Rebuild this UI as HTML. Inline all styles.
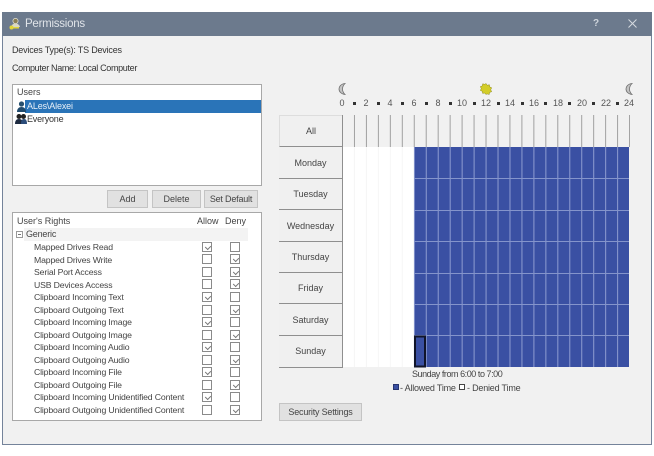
<!DOCTYPE html>
<html><head><meta charset="utf-8"><style>
html,body{margin:0;padding:0;background:#fff}
body{width:654px;height:456px;position:relative;overflow:hidden;font-family:"Liberation Sans",sans-serif;font-size:9px;color:#3a3a3a;filter:blur(.35px)}
.a{position:absolute;white-space:nowrap}
.btn{position:absolute;background:#e1e1e1;border:1px solid #c4c4c4;box-sizing:border-box;text-align:center;color:#444;font-size:9px}
.day{position:absolute;left:279px;width:64px;background:#f0f0f0;border-bottom:1px solid #8f8f8f;border-right:1px solid #8f8f8f;box-sizing:border-box;text-align:center;color:#444;font-size:9px}
.r{position:absolute;left:34px;white-space:nowrap;font-size:8.7px;letter-spacing:-.15px;line-height:12px;color:#444}
.c{position:absolute;width:10px;height:10px;background:#fff;border:1px solid #8a8a8a;box-sizing:border-box}
.t:after{content:"";position:absolute;left:2px;top:1px;width:4px;height:2.5px;border-left:1px solid #777;border-bottom:1px solid #777;transform:rotate(-45deg) translate(-0.5px,1px)}
.h{position:absolute;top:97px;width:16px;text-align:center;font-size:9px;line-height:12px;color:#555}
.dot{position:absolute;top:102px;width:3px;height:3px;background:#333}
</style></head><body>

<div class="a" style="left:2px;top:12px;width:650px;height:433px;background:#f1f1f1;border:1px solid #74839a;box-sizing:border-box"></div>
<div class="a" style="left:2px;top:12px;width:650px;height:24px;background:#6c7a8d"></div>
<svg class="a" style="left:8px;top:17px" width="14" height="14" viewBox="0 0 14 14"><circle cx="7.5" cy="4" r="2.6" fill="#8a7f55" stroke="#e8e6d8" stroke-width=".7"/><path d="M3 10c.5-2.5 2.500-3.400 4.500-3.400S11.500 7.500 12 10z" fill="#dad8c4"/><circle cx="3.500" cy="10.500" r="2" fill="#e2d63a"/><rect x="4" y="10" width="7" height="1.500" fill="#e2d63a"/></svg>
<div class="a" style="left:25px;top:17px;font-size:11.5px;letter-spacing:-.25px;line-height:15px;color:#dfe3e8">Permissions</div>
<div class="a" style="left:593px;top:18px;font-size:10px;font-weight:bold;line-height:12px;color:#cfd5dc">?</div>
<svg class="a" style="left:628px;top:19px" width="9" height="9" viewBox="0 0 9 9"><path d="M.5.500l8 8M8.500.500l-8 8" stroke="#d5dae0" stroke-width="1"/></svg>

<div class="a" style="left:12px;top:44px;line-height:12px;color:#333;letter-spacing:-.2px">Devices Type(s): TS Devices</div>
<div class="a" style="left:12px;top:62px;line-height:12px;color:#333;letter-spacing:-.33px">Computer Name: Local Computer</div>

<div class="a" style="left:12px;top:84px;width:250px;height:102px;background:#fff;border:1px solid #a8a8a8;box-sizing:border-box"></div>
<div class="a" style="left:17px;top:86px;line-height:12px;color:#444">Users</div>
<div class="a" style="left:25px;top:100px;width:236px;height:13px;background:#2a74b8"></div>
<div class="a" style="left:27px;top:100px;line-height:13px;color:#e8f0f8;letter-spacing:-.15px">ALes\Alexei</div>
<svg class="a" style="left:16px;top:100px" width="10" height="13" viewBox="0 0 10 13"><circle cx="5.500" cy="4" r="2.600" fill="#27506f"/><path d="M1 12c0-3.500 2-5 4.500-5S10 8.500 10 12z" fill="#1f4a6d"/></svg>
<svg class="a" style="left:15px;top:113px" width="12" height="12" viewBox="0 0 12 12"><circle cx="4" cy="3.500" r="2.500" fill="#222"/><circle cx="8.500" cy="3.500" r="2.500" fill="#222"/><path d="M0 11c0-3.500 1.500-5 4-5s4 1.500 4 5z" fill="#1d2a40"/><path d="M6 11c0-3.500 1-5 3-5s3 1.500 3 5z" fill="#2b4c7a"/></svg>
<div class="a" style="left:27px;top:113px;line-height:12px;color:#333;letter-spacing:-.2px">Everyone</div>

<div class="btn" style="left:107px;top:190px;width:41px;height:18px;line-height:16px">Add</div>
<div class="btn" style="left:152px;top:190px;width:49px;height:18px;line-height:16px">Delete</div>
<div class="btn" style="left:204px;top:190px;width:54px;height:18px;line-height:16px;letter-spacing:-.2px">Set Default</div>

<div class="a" style="left:12px;top:212px;width:250px;height:209px;background:#fff;border:1px solid #a8a8a8;box-sizing:border-box"></div>
<div class="a" style="left:17px;top:215px;line-height:12px;color:#444">User's Rights</div>
<div class="a" style="left:197px;top:215px;line-height:12px;color:#444">Allow</div>
<div class="a" style="left:225px;top:215px;line-height:12px;color:#444">Deny</div>
<div class="a" style="left:24px;top:228px;width:224px;height:13px;background:#f3f3f3"></div>
<div class="a" style="left:16px;top:231px;width:7px;height:7px;border:1px solid #999;box-sizing:border-box"></div>
<div class="a" style="left:18px;top:234px;width:3px;height:1px;background:#777"></div>
<div class="a" style="left:26px;top:228px;line-height:12px;color:#444;letter-spacing:-.2px">Generic</div>

<div class="r" style="top:241px">Mapped Drives Read</div><div class="c t" style="left:202px;top:242px"></div><div class="c" style="left:230px;top:242px"></div>
<div class="r" style="top:254px">Mapped Drives Write</div><div class="c" style="left:202px;top:254px"></div><div class="c t" style="left:230px;top:254px"></div>
<div class="r" style="top:266px">Serial Port Access</div><div class="c" style="left:202px;top:267px"></div><div class="c t" style="left:230px;top:267px"></div>
<div class="r" style="top:279px">USB Devices Access</div><div class="c" style="left:202px;top:279px"></div><div class="c t" style="left:230px;top:279px"></div>
<div class="r" style="top:291px">Clipboard Incoming Text</div><div class="c t" style="left:202px;top:292px"></div><div class="c" style="left:230px;top:292px"></div>
<div class="r" style="top:304px">Clipboard Outgoing Text</div><div class="c" style="left:202px;top:305px"></div><div class="c t" style="left:230px;top:305px"></div>
<div class="r" style="top:316px">Clipboard Incoming Image</div><div class="c t" style="left:202px;top:317px"></div><div class="c" style="left:230px;top:317px"></div>
<div class="r" style="top:329px">Clipboard Outgoing Image</div><div class="c" style="left:202px;top:330px"></div><div class="c t" style="left:230px;top:330px"></div>
<div class="r" style="top:341px">Clipboard Incoming Audio</div><div class="c t" style="left:202px;top:342px"></div><div class="c" style="left:230px;top:342px"></div>
<div class="r" style="top:354px">Clipboard Outgoing Audio</div><div class="c" style="left:202px;top:355px"></div><div class="c t" style="left:230px;top:355px"></div>
<div class="r" style="top:366px">Clipboard Incoming File</div><div class="c t" style="left:202px;top:367px"></div><div class="c" style="left:230px;top:367px"></div>
<div class="r" style="top:379px">Clipboard Outgoing File</div><div class="c" style="left:202px;top:380px"></div><div class="c t" style="left:230px;top:380px"></div>
<div class="r" style="top:391px">Clipboard Incoming Unidentified Content</div><div class="c t" style="left:202px;top:392px"></div><div class="c" style="left:230px;top:392px"></div>
<div class="r" style="top:404px">Clipboard Outgoing Unidentified Content</div><div class="c" style="left:202px;top:405px"></div><div class="c t" style="left:230px;top:405px"></div>

<svg class="a" style="left:338px;top:83px" width="9" height="12" viewBox="0 0 9 12"><path d="M7 .500C2.500 1 1 4 1 6c0 2.500 2 5 6 5.500C5 9.500 4.500 8 4.500 6S5 2.500 7 .500z" fill="#c4c4c4" stroke="#6f6f6f" stroke-width=".8"/></svg>
<svg class="a" style="left:480px;top:83px" width="12" height="12" viewBox="0 0 12 12"><path d="M6 .500l1.300 1.800 2.100-.6.300 2.200 2 .9-1 2 1 1.900-2.100.7-.4 2.100-2.100-.6L6 11.500l-1.300-1.500-2.100.4-.3-2.100-2-.9 1-1.800-1-2 2-.7.4-2.100 2 .5z" fill="#d3cd28" stroke="#8d8a22" stroke-width=".5"/></svg>
<svg class="a" style="left:625px;top:83px" width="9" height="12" viewBox="0 0 9 12"><path d="M7 .500C2.500 1 1 4 1 6c0 2.500 2 5 6 5.500C5 9.500 4.500 8 4.500 6S5 2.500 7 .500z" fill="#c4c4c4" stroke="#6f6f6f" stroke-width=".8"/></svg>

<div class="h" style="left:334px">0</div><div class="h" style="left:358px">2</div><div class="h" style="left:382px">4</div><div class="h" style="left:406px">6</div><div class="h" style="left:430px">8</div><div class="h" style="left:454px">10</div><div class="h" style="left:478px">12</div><div class="h" style="left:502px">14</div><div class="h" style="left:526px">16</div><div class="h" style="left:550px">18</div><div class="h" style="left:574px">20</div><div class="h" style="left:598px">22</div><div class="h" style="left:621px">24</div>
<div class="dot" style="left:353px"></div><div class="dot" style="left:377px"></div><div class="dot" style="left:401px"></div><div class="dot" style="left:425px"></div><div class="dot" style="left:449px"></div><div class="dot" style="left:473px"></div><div class="dot" style="left:497px"></div><div class="dot" style="left:521px"></div><div class="dot" style="left:544px"></div><div class="dot" style="left:568px"></div><div class="dot" style="left:592px"></div><div class="dot" style="left:616px"></div>

<div class="day" style="top:115px;height:32px;line-height:31px;border-top:1px solid #ddd;border-left:1px solid #ddd">All</div>
<div class="day" style="top:147px;height:32px;line-height:33px">Monday</div>
<div class="day" style="top:179px;height:31px;line-height:30px">Tuesday</div>
<div class="day" style="top:210px;height:32px;line-height:33px">Wednesday</div>
<div class="day" style="top:242px;height:31px;line-height:30px">Thursday</div>
<div class="day" style="top:273px;height:31px;line-height:30px">Friday</div>
<div class="day" style="top:304px;height:32px;line-height:33px">Saturday</div>
<div class="day" style="top:336px;height:32px;line-height:31px">Sunday</div>

<svg class="a" style="left:342px;top:115px" width="290" height="254" viewBox="0 0 290 254">
<defs>
<pattern id="pa" width="11.960" height="40" patternUnits="userSpaceOnUse"><rect x="0" width="1" height="40" fill="#a0a0a0"/></pattern>
<pattern id="pw" width="11.960" height="40" patternUnits="userSpaceOnUse"><rect x="0" width="1" height="40" fill="#f6f6f6"/></pattern>
<pattern id="pb" width="11.960" height="40" patternUnits="userSpaceOnUse"><rect x="0" width="1" height="40" fill="#8d9bd0"/></pattern>
</defs>
<rect x="0" y="0" width="288" height="32" fill="url(#pa)"/>
<rect x="0" y="0" width="1" height="252" fill="#8f8f8f"/>
<rect x="1" y="32" width="71" height="220" fill="#fff"/>
<rect x="1" y="32" width="71" height="220" fill="url(#pw)"/>
<rect x="72" y="32" width="215" height="220" fill="#3a50a3"/>
<g transform="translate(71.800 0)"><rect x="0" y="32" width="215" height="220" fill="url(#pb)"/></g>
<g fill="#8494cb"><rect x="72" y="63" width="215" height="1"/><rect x="72" y="95" width="215" height="1"/><rect x="72" y="126" width="215" height="1"/><rect x="72" y="158" width="215" height="1"/><rect x="72" y="189" width="215" height="1"/><rect x="72" y="220" width="215" height="1"/></g>
<rect x="73" y="221.500" width="10" height="30" fill="#3a50a3" stroke="#10142a" stroke-width="2"/>
</svg>

<div class="a" style="left:412px;top:368px;line-height:12px;color:#444;letter-spacing:-.45px">Sunday from 6:00 to 7:00</div>
<div class="a" style="left:393px;top:384px;width:6px;height:6px;box-sizing:border-box;background:#3a50a3;border:1px solid #27346f"></div>
<div class="a" style="left:400px;top:382px;line-height:12px;color:#444;letter-spacing:-.2px">- Allowed Time</div>
<div class="a" style="left:459px;top:384px;width:6px;height:6px;box-sizing:border-box;background:#fff;border:1px solid #444"></div>
<div class="a" style="left:467px;top:382px;line-height:12px;color:#444;letter-spacing:-.2px">- Denied Time</div>

<div class="btn" style="left:279px;top:403px;width:83px;height:18px;line-height:16px;letter-spacing:-.2px">Security Settings</div>
</body></html>
